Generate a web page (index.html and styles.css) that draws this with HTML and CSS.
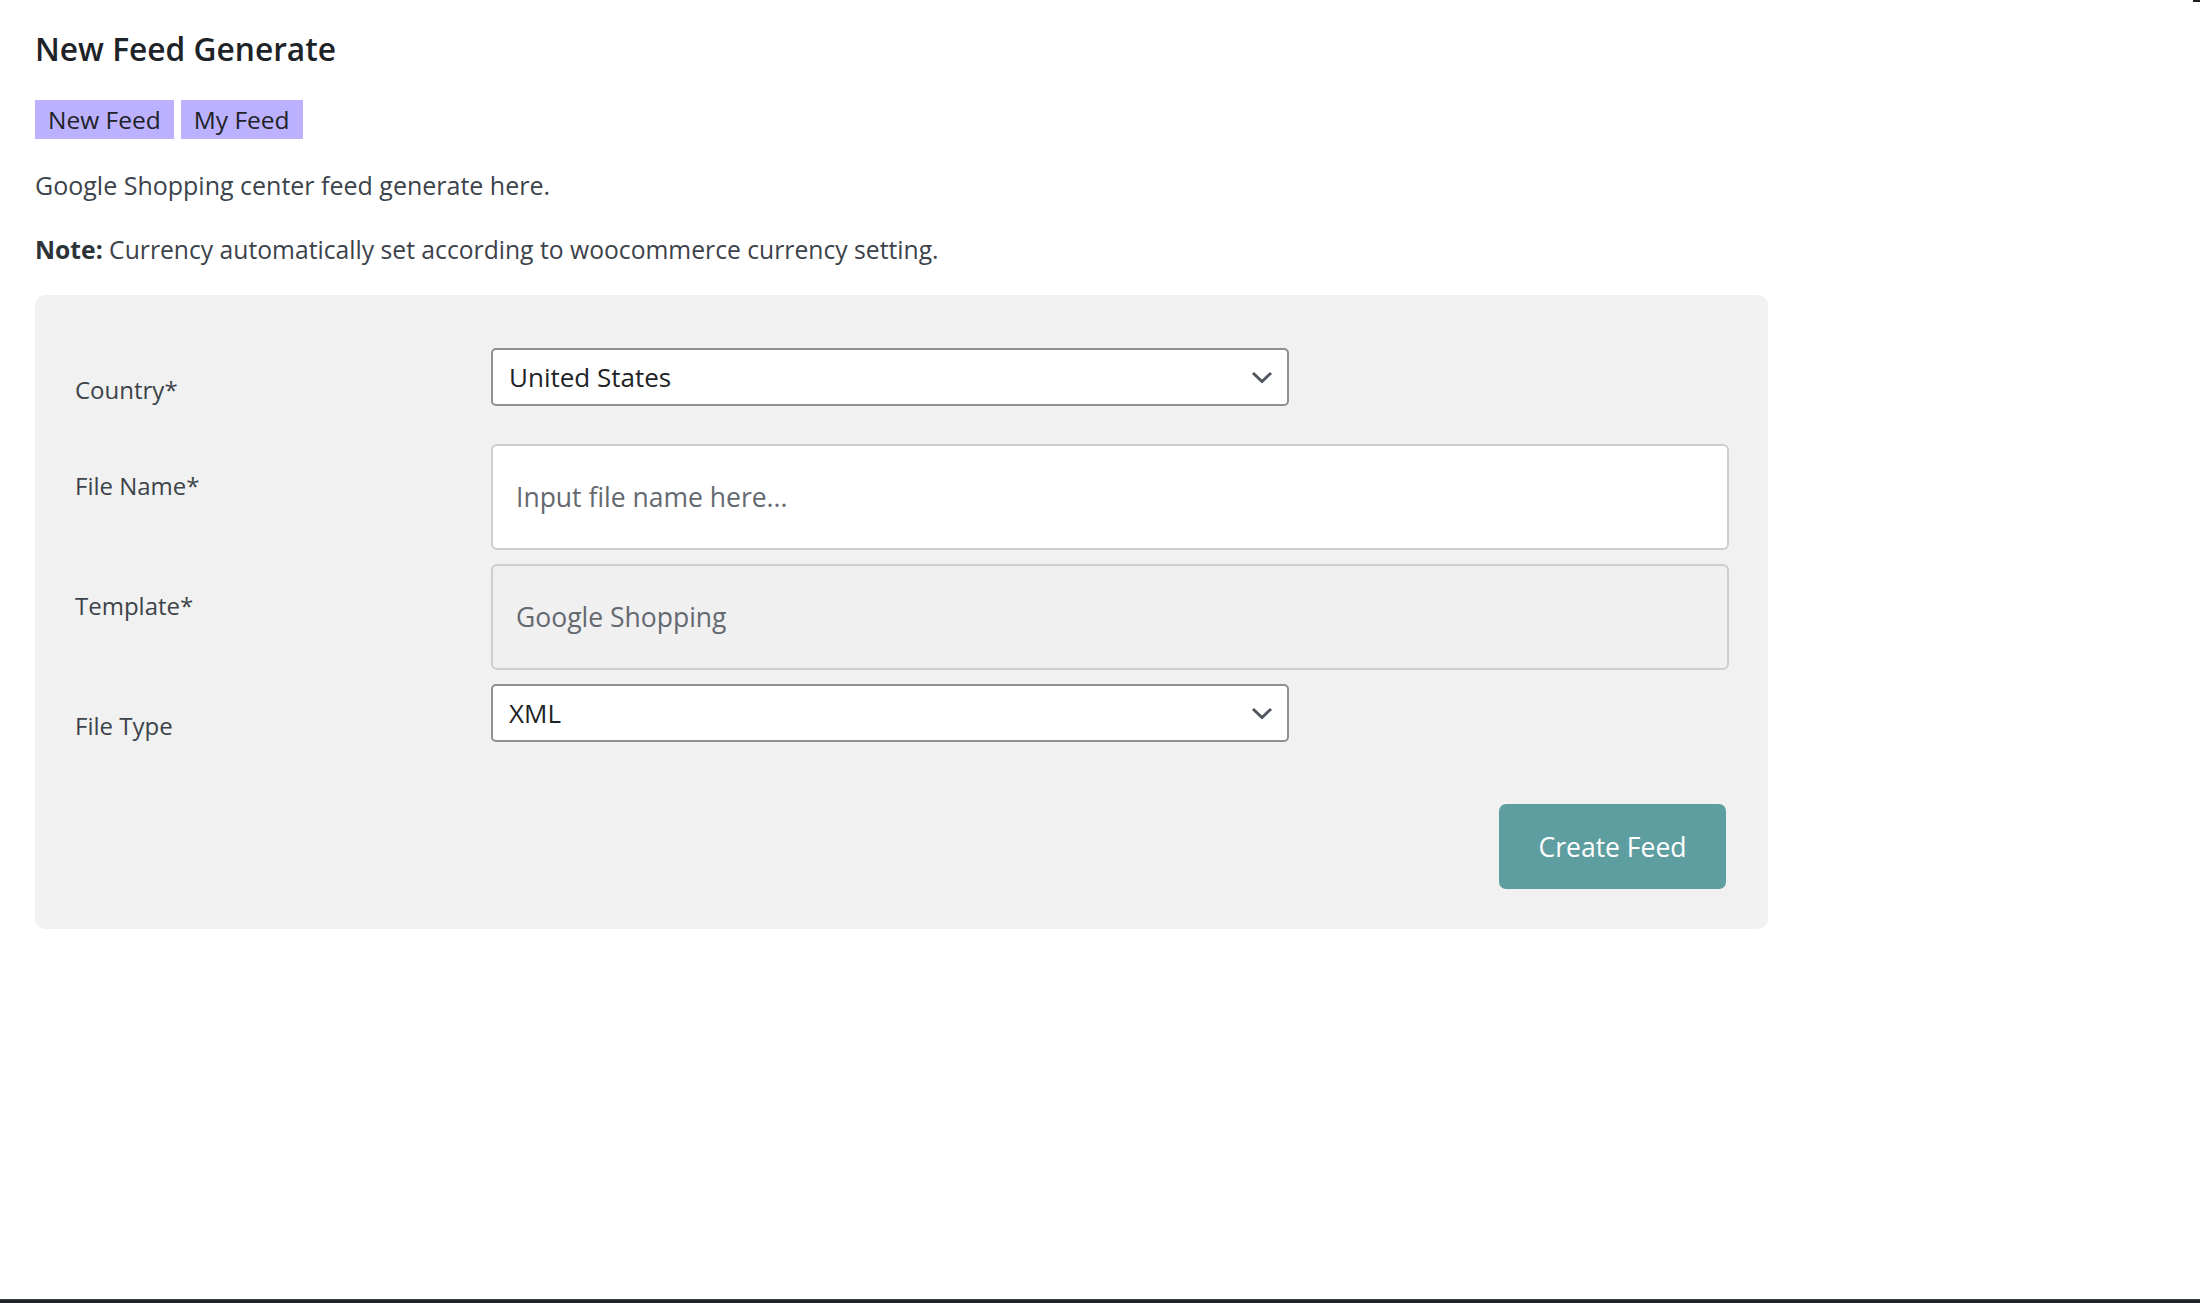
FILE: index.html
```html
<!DOCTYPE html>
<html lang="en">
<head>
<meta charset="utf-8">
<title>New Feed Generate</title>
<link rel="stylesheet" href="styles.css">
</head>
<body>
<div class="corner-mark"></div>
<main class="wrap">
  <h1 class="title">New Feed Generate</h1>
  <nav class="tabs">
    <a class="tab" href="#">New Feed</a>
    <a class="tab" href="#">My Feed</a>
  </nav>
  <p class="desc">Google Shopping center feed generate here.</p>
  <p class="desc note"><strong>Note:</strong> Currency automatically set according to woocommerce currency setting.</p>

  <form class="panel">
    <div class="row">
      <label class="label">Country*</label>
      <div class="field">
        <div class="select">
          <span>United States</span>
          <svg class="chev" width="22" height="13" viewBox="0 0 22 13"><path d="M2 2 L11 10.5 L20 2" fill="none" stroke="#50575e" stroke-width="3"/></svg>
        </div>
      </div>
    </div>
    <div class="row">
      <label class="label">File Name*</label>
      <div class="field">
        <input class="text-input" type="text" placeholder="Input file name here...">
      </div>
    </div>
    <div class="row">
      <label class="label">Template*</label>
      <div class="field">
        <input class="text-input readonly" type="text" value="Google Shopping" readonly>
      </div>
    </div>
    <div class="row">
      <label class="label">File Type</label>
      <div class="field">
        <div class="select">
          <span>XML</span>
          <svg class="chev" width="22" height="13" viewBox="0 0 22 13"><path d="M2 2 L11 10.5 L20 2" fill="none" stroke="#50575e" stroke-width="3"/></svg>
        </div>
      </div>
    </div>
    <div class="actions">
      <button type="button" class="btn">Create Feed</button>
    </div>
  </form>
</main>
<div class="taskbar"></div>
</body>
</html>
```

FILE: styles.css
```css
* { box-sizing: border-box; }

html, body { height: 100%; }

body {
  margin: 0;
  background: #ffffff;
  font-family: "Open Sans", "Noto Sans", sans-serif;
  color: #3c434a;
  display: flex;
  flex-direction: column;
  position: relative;
}

.corner-mark {
  position: absolute;
  top: 0;
  right: 0;
  width: 7px;
  height: 2px;
  background: #1d2327;
}

.wrap {
  flex: 1;
  padding: 28px 0 0 35px;
}

.title {
  margin: 0;
  font-size: 31.7px;
  line-height: 42px;
  font-weight: 600;
  color: #1d2327;
}

.tabs {
  display: flex;
  gap: 7px;
  margin-top: 30px;
}

.tab {
  display: block;
  height: 39px;
  line-height: 39px;
  padding: 0 13px;
  background: #bbb1fe;
  color: #1d2327;
  font-size: 24.5px;
  text-decoration: none;
}

.desc {
  margin: 28px 0 0;
  font-size: 25px;
  line-height: 36px;
  color: #3c434a;
}

.note { margin-top: 29px; font-size: 24.7px; }

.note strong { font-weight: 700; color: #2c3338; }

.panel {
  margin-top: 27px;
  width: 1733px;
  background: #f1f1f1;
  border-radius: 10px;
  padding: 53px 39px 40px 40px;
  display: flex;
  flex-direction: column;
  gap: 14px;
}

.row {
  display: flex;
  align-items: flex-start;
}

.label {
  width: 416px;
  flex: none;
  padding: 24px 0 22px;
  font-size: 24px;
  line-height: 36px;
  color: #3c434a;
}

.field { flex: 1; }

.select {
  width: 798px;
  height: 58px;
  background: #fff;
  border: 2px solid #8c8f94;
  border-radius: 5px;
  padding: 0 14px 0 16px;
  display: flex;
  align-items: center;
  justify-content: space-between;
  font-size: 26px;
  color: #1d2327;
}

.chev { flex: none; }

.text-input {
  display: block;
  width: 100%;
  height: 106px;
  border: 2px solid #cdcdcd;
  border-radius: 6px;
  background: #fff;
  padding: 0 23px;
  font-family: "Open Sans", "Noto Sans", sans-serif;
  font-size: 26.5px;
  color: #646970;
  outline: none;
}

.text-input::placeholder { color: #646970; opacity: 1; }

.text-input.readonly { background: #f0f0f0; }

.actions {
  display: flex;
  justify-content: flex-end;
  padding-right: 3px;
  margin-top: 24px;
}

.btn {
  width: 227px;
  height: 85px;
  border: none;
  border-radius: 7px;
  background: #5f9ea0;
  color: #ffffff;
  font-family: "Open Sans", "Noto Sans", sans-serif;
  font-size: 26.5px;
  cursor: pointer;
}

.taskbar {
  flex: none;
  height: 4px;
  background: #202428;
  border-top: 1px solid #3f4346;
}
```
